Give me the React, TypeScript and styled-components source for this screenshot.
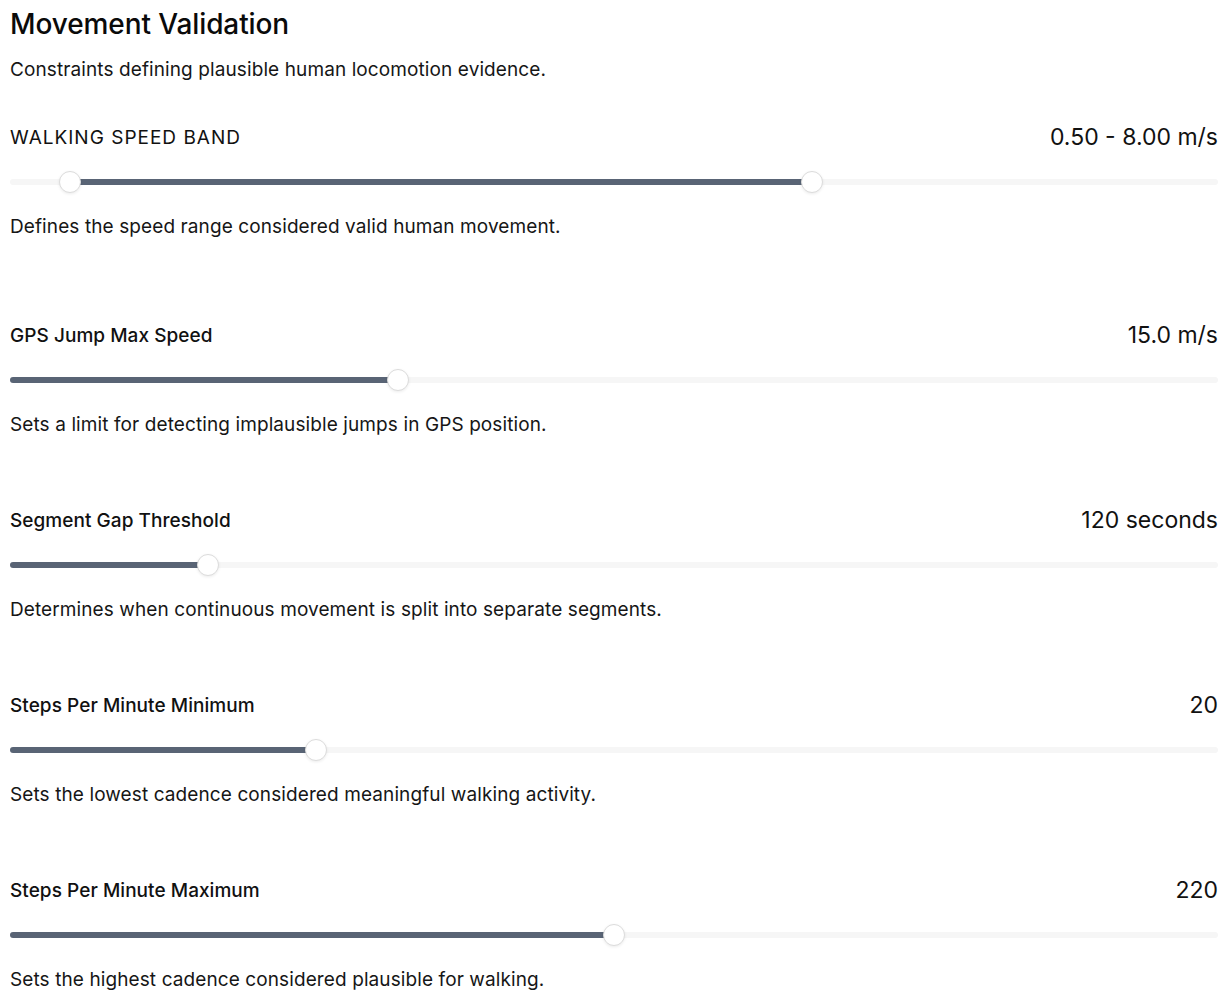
import styled, { createGlobalStyle } from 'styled-components';

const GlobalStyle = createGlobalStyle`
  html, body {
    margin: 0;
    padding: 0;
    background: #ffffff;
  }
  body {
    font-family: Inter, "Liberation Sans", sans-serif;
    color: #111111;
  }
`;

const Page = styled.div`
  padding: 8px 14px 0 10px;
`;

const Title = styled.h1`
  margin: 0;
  font-size: 28px;
  line-height: 32px;
  font-weight: 500;
  color: #0a0a0a;
  letter-spacing: -0.1px;
`;

const Subtitle = styled.p`
  margin: 18px 0 0;
  font-size: 19px;
  line-height: 24px;
  letter-spacing: 0.1px;
  color: #161616;
`;

const Section = styled.section<{ $first?: boolean }>`
  display: flex;
  flex-direction: column;
  margin-top: ${(p) => (p.$first ? '41px' : '0')};
  padding-bottom: ${(p) => (p.$first ? '82px' : '69px')};

  &:last-child {
    padding-bottom: 0;
  }
`;

const Header = styled.div`
  display: flex;
  justify-content: space-between;
  align-items: center;
  height: 28px;
`;

const Label = styled.span<{ $caps?: boolean }>`
  font-size: 19px;
  font-weight: ${(p) => (p.$caps ? 400 : 500)};
  letter-spacing: ${(p) => (p.$caps ? '1px' : '0.05px')};
  text-transform: ${(p) => (p.$caps ? 'uppercase' : 'none')};
  color: #111111;
`;

const Value = styled.span`
  font-size: 23px;
  font-weight: 400;
  color: #111111;
`;

const SliderArea = styled.div`
  position: relative;
  height: 22px;
  margin-top: 20px;
  display: flex;
  align-items: center;
`;

const Track = styled.div`
  position: relative;
  width: 100%;
  height: 6px;
  border-radius: 3px;
  background: #f6f6f6;
`;

const Fill = styled.div`
  position: absolute;
  top: 0;
  bottom: 0;
  border-radius: 3px;
  background: #596475;
`;

const Thumb = styled.div`
  position: absolute;
  top: 0;
  width: 22px;
  height: 22px;
  box-sizing: border-box;
  border-radius: 50%;
  background: #ffffff;
  border: 1px solid #dcdcdc;
  box-shadow: 0 1px 3px rgba(0, 0, 0, 0.08);
`;

const Description = styled.p`
  margin: 22px 0 0;
  font-size: 19px;
  line-height: 24px;
  letter-spacing: 0.1px;
  color: #161616;
`;

// position along the track, keeping the thumb inside its bounds
const at = (p: number) => `calc(11px + (100% - 22px) * ${p})`;
const thumbLeft = (p: number) => `calc((100% - 22px) * ${p})`;

type Setting = {
  label: string;
  value: string;
  description: string;
  from?: number;
  to: number;
  caps?: boolean;
};

const settings: Setting[] = [
  {
    label: 'Walking Speed Band',
    value: '0.50 - 8.00 m/s',
    description: 'Defines the speed range considered valid human movement.',
    from: 0.5 / 12,
    to: 8 / 12,
    caps: true,
  },
  {
    label: 'GPS Jump Max Speed',
    value: '15.0 m/s',
    description: 'Sets a limit for detecting implausible jumps in GPS position.',
    to: 0.318,
  },
  {
    label: 'Segment Gap Threshold',
    value: '120 seconds',
    description: 'Determines when continuous movement is split into separate segments.',
    to: 0.158,
  },
  {
    label: 'Steps Per Minute Minimum',
    value: '20',
    description: 'Sets the lowest cadence considered meaningful walking activity.',
    to: 0.249,
  },
  {
    label: 'Steps Per Minute Maximum',
    value: '220',
    description: 'Sets the highest cadence considered plausible for walking.',
    to: 0.5,
  },
];

const Slider = ({ from, to }: { from?: number; to: number }) => {
  const start = from === undefined ? '0px' : at(from);
  return (
    <SliderArea>
      <Track>
        <Fill style={{ left: start, width: `calc(${at(to)} - ${start})` }} />
      </Track>
      {from !== undefined && <Thumb style={{ left: thumbLeft(from) }} />}
      <Thumb style={{ left: thumbLeft(to) }} />
    </SliderArea>
  );
};

export default function App() {
  return (
    <Page>
      <GlobalStyle />
      <Title>Movement Validation</Title>
      <Subtitle>Constraints defining plausible human locomotion evidence.</Subtitle>
      {settings.map((s, i) => (
        <Section key={s.label} $first={i === 0}>
          <Header>
            <Label $caps={s.caps}>{s.label}</Label>
            <Value>{s.value}</Value>
          </Header>
          <Slider from={s.from} to={s.to} />
          <Description>{s.description}</Description>
        </Section>
      ))}
    </Page>
  );
}
